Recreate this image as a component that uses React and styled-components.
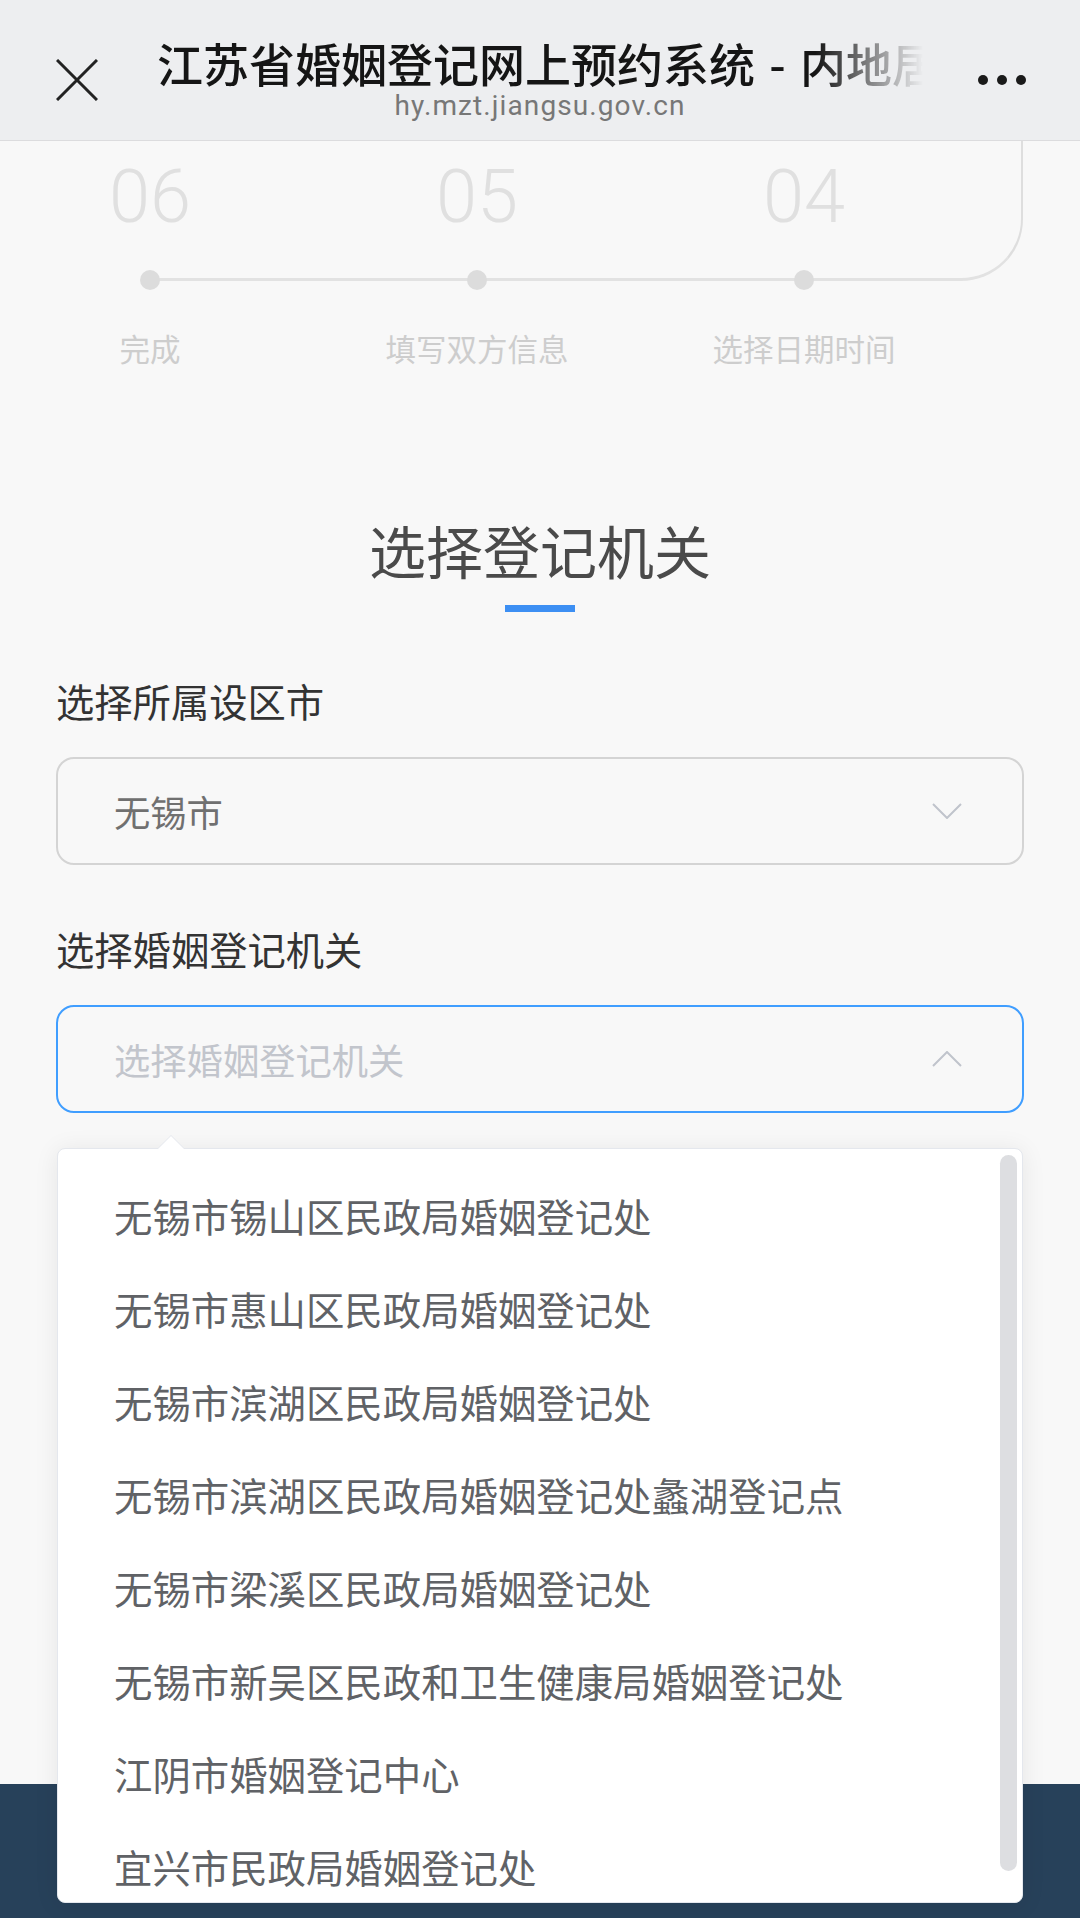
import React from 'react'
import styled, { createGlobalStyle } from 'styled-components'

const GlobalStyle = createGlobalStyle`
    body {
        margin: 0;
        background: #f8f8f8;
        font-family: "Noto Sans CJK SC", "Noto Sans", sans-serif;
    }
    * {
        box-sizing: border-box;
    }
`

const steps = [
    { num: '06', label: '完成' },
    { num: '05', label: '填写双方信息' },
    { num: '04', label: '选择日期时间' },
]

const offices = [
    '无锡市锡山区民政局婚姻登记处',
    '无锡市惠山区民政局婚姻登记处',
    '无锡市滨湖区民政局婚姻登记处',
    '无锡市滨湖区民政局婚姻登记处蠡湖登记点',
    '无锡市梁溪区民政局婚姻登记处',
    '无锡市新吴区民政和卫生健康局婚姻登记处',
    '江阴市婚姻登记中心',
    '宜兴市民政局婚姻登记处',
]

const Chevron = ({ up }) => (
    <svg width="30" height="16" viewBox="0 0 30 16" fill="none">
        <path d={up ? 'M1 15 L15 1 L29 15' : 'M1 1 L15 15 L29 1'} stroke="#c0c4cc" strokeWidth="2" />
    </svg>
)

const App = () => {
    return (
        <Page>
            <GlobalStyle />
            <Header>
                <CloseBtn>
                    <svg width="42" height="42" viewBox="0 0 42 42">
                        <path d="M1 1 L41 41 M41 1 L1 41" stroke="#222" strokeWidth="3" />
                    </svg>
                </CloseBtn>
                <TitleBlock>
                    <Title>江苏省婚姻登记网上预约系统 - 内地居民</Title>
                    <Url>hy.mzt.jiangsu.gov.cn</Url>
                </TitleBlock>
                <MoreBtn>
                    <span /><span /><span />
                </MoreBtn>
            </Header>

            <StepsArea>
                <Track />
                <StepGrid>
                    {steps.map(s => (
                        <Step key={s.num}>
                            <StepNum>{s.num}</StepNum>
                            <StepDot />
                            <StepLabel>{s.label}</StepLabel>
                        </Step>
                    ))}
                </StepGrid>
            </StepsArea>

            <Main>
                <Heading>选择登记机关</Heading>
                <HeadingBar />

                <FieldLabel>选择所属设区市</FieldLabel>
                <Select>
                    <SelectText>无锡市</SelectText>
                    <Chevron />
                </Select>

                <FieldLabel>选择婚姻登记机关</FieldLabel>
                <SelectWrap>
                    <Select active>
                        <SelectText placeholder>选择婚姻登记机关</SelectText>
                        <Chevron up />
                    </Select>
                    <Dropdown>
                        <Arrow />
                        <OptionList>
                            {offices.map(o => (
                                <Option key={o}>{o}</Option>
                            ))}
                        </OptionList>
                        <Thumb />
                    </Dropdown>
                </SelectWrap>
            </Main>

            <Footer />
        </Page>
    )
}

const Page = styled.div`
    width: 1080px;
    min-height: 1918px;
    background: #f8f8f8;
    overflow: hidden;
`

const Header = styled.div`
    height: 141px;
    background: #edeef0;
    border-bottom: 1px solid #dcdcde;
    display: grid;
    grid-template-columns: 157px 1fr 157px;
`

const CloseBtn = styled.div`
    padding: 59px 0 0 56px;
`

const TitleBlock = styled.div`
    display: flex;
    flex-direction: column;
    align-items: center;
    padding-top: 36px;
    min-width: 0;
`

const Title = styled.div`
    width: 100%;
    font-size: 46px;
    line-height: 52px;
    font-weight: 500;
    word-spacing: 4px;
    color: #151515;
    white-space: nowrap;
    overflow: hidden;
    -webkit-mask-image: linear-gradient(to right, #000 86%, transparent 100%);
    mask-image: linear-gradient(to right, #000 86%, transparent 100%);
`

const Url = styled.div`
    margin-top: 2px;
    font-family: Roboto, "Noto Sans", sans-serif;
    font-size: 28px;
    line-height: 32px;
    letter-spacing: 1.1px;
    color: #777;
`

const MoreBtn = styled.div`
    display: flex;
    gap: 9px;
    padding: 75px 0 0 55px;
    span {
        width: 10px;
        height: 10px;
        border-radius: 50%;
        background: #1a1a1a;
    }
`

const StepsArea = styled.div`
    position: relative;
    padding-top: 19px;
`

const Track = styled.div`
    position: absolute;
    left: 150px;
    top: 0;
    width: 873px;
    height: 140px;
    border-right: 2px solid #dedede;
    border-bottom: 3px solid #e2e2e2;
    border-bottom-right-radius: 62px;
`

const StepGrid = styled.div`
    position: relative;
    display: grid;
    grid-template-columns: repeat(3, 300px);
    column-gap: 27px;
`

const Step = styled.div`
    display: flex;
    flex-direction: column;
    align-items: center;
`

const StepNum = styled.div`
    font-family: Roboto, "Noto Sans", sans-serif;
    font-size: 74px;
    line-height: 74px;
    font-weight: 300;
    color: #e0e0e0;
`

const StepDot = styled.div`
    width: 20px;
    height: 20px;
    border-radius: 50%;
    background: #dcdcdc;
    margin-top: 36px;
`

const StepLabel = styled.div`
    margin-top: 38px;
    font-size: 30.5px;
    line-height: 40px;
    color: #cdcdcd;
`

const Main = styled.div`
    padding: 146px 56px 671px;
    display: flex;
    flex-direction: column;
`

const Heading = styled.div`
    text-align: center;
    font-size: 57px;
    line-height: 70px;
    color: #4a4a4a;
`

const HeadingBar = styled.div`
    align-self: center;
    width: 70px;
    height: 7px;
    margin-top: 21px;
    background: #3d8ff3;
`

const FieldLabel = styled.div`
    margin-top: 65px;
    font-size: 38.3px;
    line-height: 48px;
    color: #333;
`

const SelectWrap = styled.div`
    position: relative;
`

const Select = styled.div`
    margin-top: 32px;
    height: 108px;
    border: 2px solid ${p => (p.active ? '#409eff' : '#d4d4d4')};
    border-radius: 18px;
    display: flex;
    align-items: center;
    justify-content: space-between;
    padding: 0 60px 0 56px;
    & + ${FieldLabel} {
        margin-top: 60px;
    }
`

const SelectText = styled.div`
    font-size: 36.3px;
    color: ${p => (p.placeholder ? '#c2c5cc' : '#707070')};
`

const Dropdown = styled.div`
    position: absolute;
    top: 175px;
    left: 1px;
    width: 966px;
    height: 755px;
    background: #fff;
    border: 1px solid #e4e7ed;
    border-radius: 8px;
    box-shadow: 0 2px 24px rgba(0, 0, 0, 0.08);
    z-index: 2;
`

const Arrow = styled.div`
    position: absolute;
    top: -14px;
    left: 99px;
    width: 0;
    height: 0;
    border-left: 14px solid transparent;
    border-right: 14px solid transparent;
    border-bottom: 14px solid #e4e7ed;
    &::after {
        content: '';
        position: absolute;
        left: -13px;
        top: 1px;
        border-left: 13px solid transparent;
        border-right: 13px solid transparent;
        border-bottom: 13px solid #fff;
    }
`

const OptionList = styled.div`
    height: 100%;
    overflow: hidden;
    padding-top: 19px;
    border-radius: 8px;
`

const Option = styled.div`
    height: 93px;
    display: flex;
    align-items: center;
    padding-left: 56px;
    font-size: 38.4px;
    color: #606266;
    white-space: nowrap;
`

const Thumb = styled.div`
    position: absolute;
    top: 6px;
    right: 5px;
    width: 17px;
    height: 716px;
    border-radius: 9px;
    background: #dddee1;
`

const Footer = styled.div`
    height: 140px;
    background: #27415a;
`

export default App
